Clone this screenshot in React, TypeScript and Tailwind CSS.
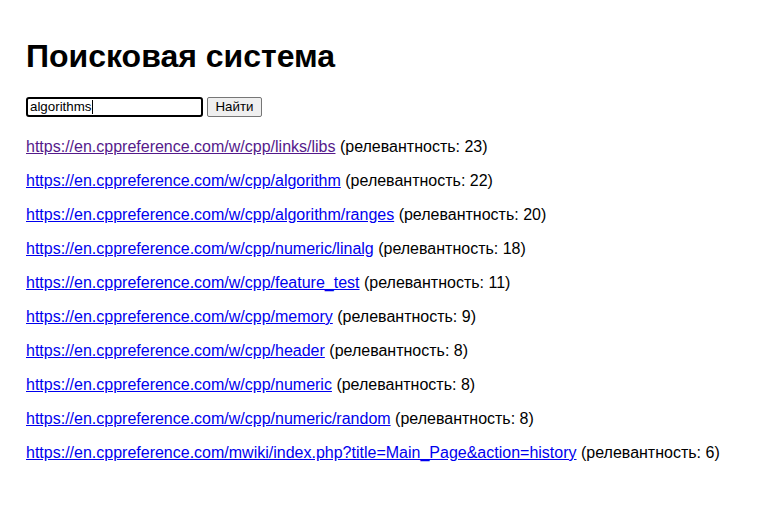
const results = [
  { url: 'https://en.cppreference.com/w/cpp/links/libs', score: 23, visited: true },
  { url: 'https://en.cppreference.com/w/cpp/algorithm', score: 22 },
  { url: 'https://en.cppreference.com/w/cpp/algorithm/ranges', score: 20 },
  { url: 'https://en.cppreference.com/w/cpp/numeric/linalg', score: 18 },
  { url: 'https://en.cppreference.com/w/cpp/feature_test', score: 11 },
  { url: 'https://en.cppreference.com/w/cpp/memory', score: 9 },
  { url: 'https://en.cppreference.com/w/cpp/header', score: 8 },
  { url: 'https://en.cppreference.com/w/cpp/numeric', score: 8 },
  { url: 'https://en.cppreference.com/w/cpp/numeric/random', score: 8 },
  { url: 'https://en.cppreference.com/mwiki/index.php?title=Main_Page&action=history', score: 6 },
]

export default function App() {
  return (
    <div className="min-h-[519px] bg-white px-[26px] pt-[38px] font-['Liberation_Sans',Arial,sans-serif] text-black">
      <h1 className="text-[32px] font-bold leading-[37px]">Поисковая система</h1>

      <form className="mt-[22px] flex items-center gap-[4px]" onSubmit={(e) => e.preventDefault()}>
        <div className="flex h-[20px] w-[177px] items-center rounded-[3px] border-2 border-black px-[2px] text-[13.33px] leading-none">
          <span>algorithms</span>
          <span className="ml-[1px] h-[14px] w-px bg-black"></span>
        </div>
        <button
          type="submit"
          className="h-[20px] w-[55px] rounded-[2px] border border-[#767676] bg-[#efefef] text-[13.33px] leading-none text-black"
        >
          Найти
        </button>
      </form>

      <div className="mt-[21px] flex flex-col gap-[16px]">
        {results.map((r) => (
          <p key={r.url} className="text-[16px] leading-[18px]">
            <a href="#" className={`underline ${r.visited ? 'text-[#551a8b]' : 'text-[#0000ee]'}`}>
              {r.url}
            </a>{' '}
            (релевантность: {r.score})
          </p>
        ))}
      </div>
    </div>
  )
}
